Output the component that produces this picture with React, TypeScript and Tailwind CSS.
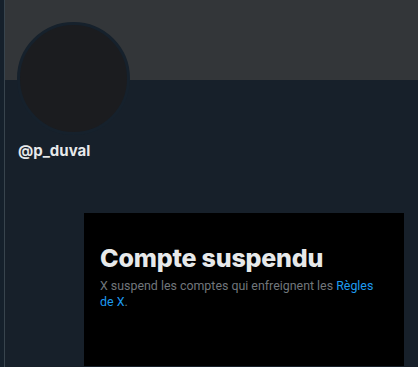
import React from "react";

export default function App() {
  return (
    <div
      className="w-[418px] h-[367px] bg-[#15202b] flex overflow-hidden"
      style={{ fontFamily: "Inter, 'Liberation Sans', sans-serif" }}
    >
      <div className="w-[5px] shrink-0 border-r border-[#38444d] bg-[#15202b]" />
      <div className="flex-1 flex flex-col relative bg-[#17202a]">
        <div className="h-[80px] bg-[#333639]" />
        <div className="absolute left-[12px] top-[22px] w-[113px] h-[113px] rounded-full bg-[#1b1c1f] border-[3px] border-[#16212c]" />
        <div className="h-[61px]" />
        <div className="pl-[13px] text-[15px] font-bold leading-[20px] text-[#e7e9ea]">
          @p_duval
        </div>
        <div className="ml-[79px] mr-[14px] mt-[52px] mb-[1px] flex-1 bg-black pt-[31px] pl-4 pr-[26px] flex flex-col">
          <div className="text-[25px] font-extrabold leading-[28px] text-[#e7e9ea] tracking-[-0.2px]">
            Compte suspendu
          </div>
          <div
            className="mt-[6px] text-[12.4px] leading-[16px] text-[#71767b]"
            style={{ fontFamily: "Roboto, 'Liberation Sans', sans-serif" }}
          >
            X suspend les comptes qui enfreignent les{" "}
            <span className="text-[#1d9bf0]">Règles de X</span>.
          </div>
        </div>
      </div>
    </div>
  );
}
